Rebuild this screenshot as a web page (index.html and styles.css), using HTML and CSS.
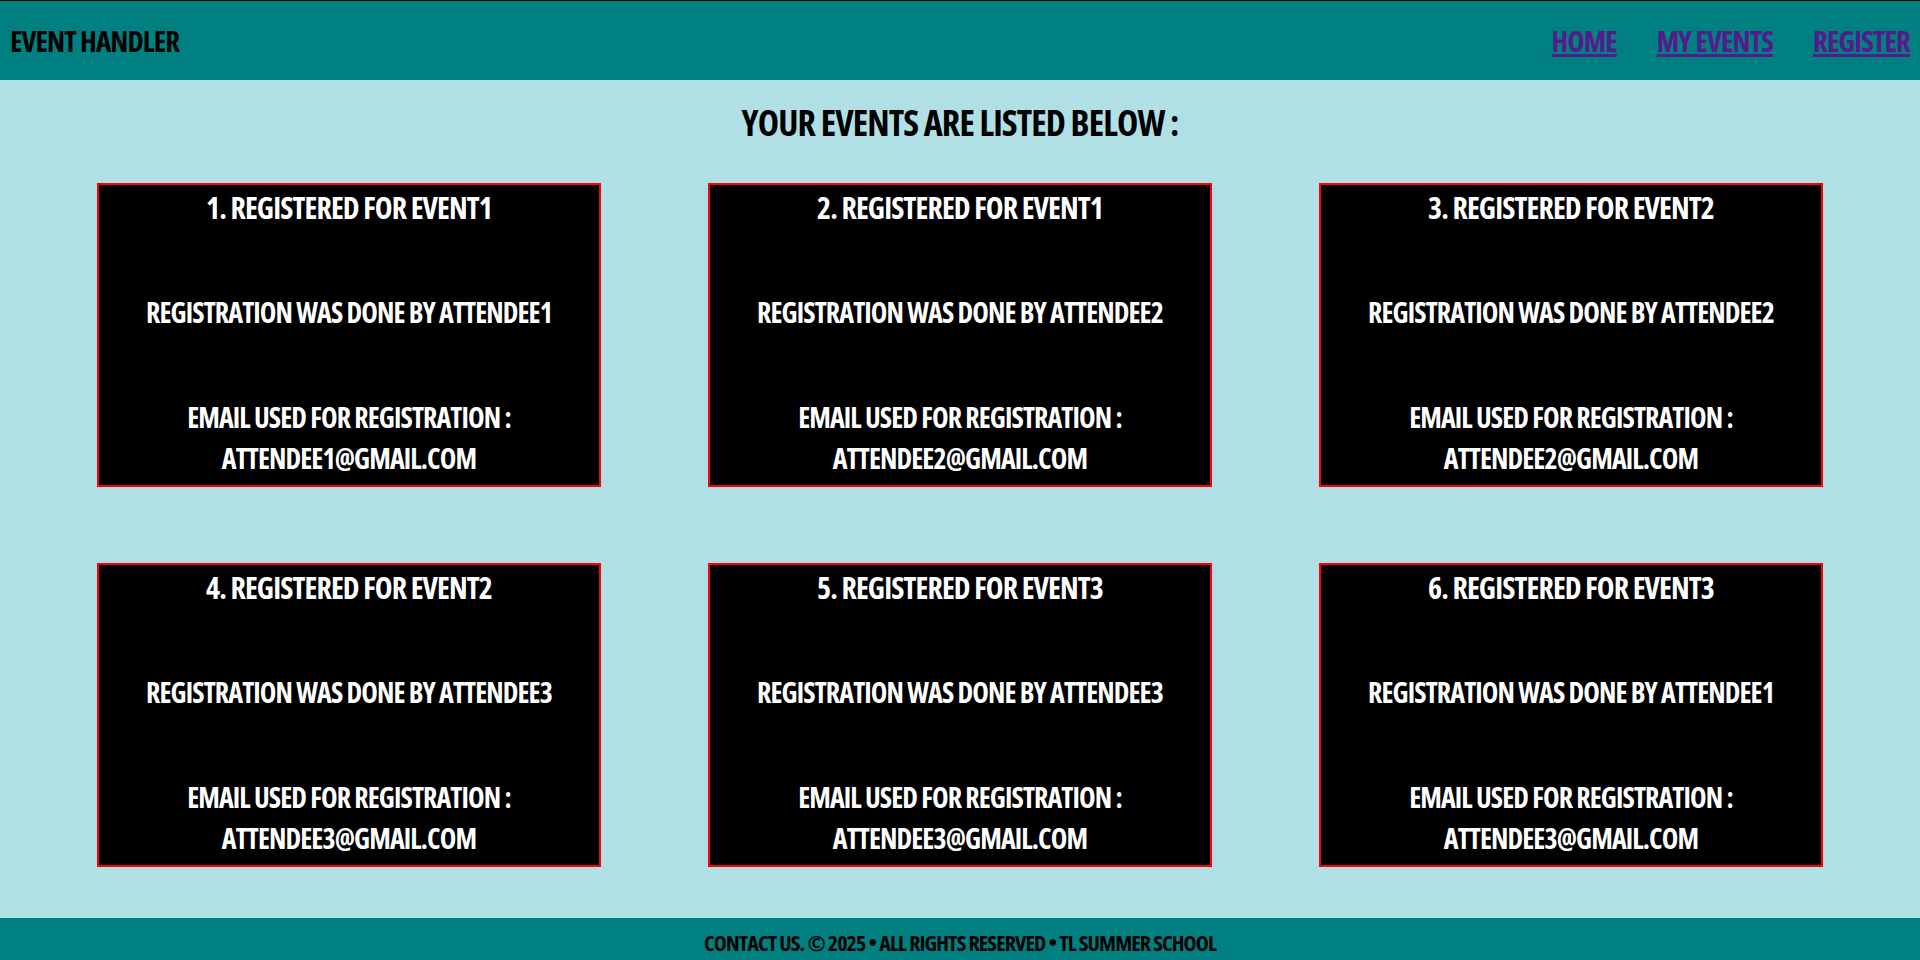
FILE: index.html
```html
<!DOCTYPE html>
<html lang="en">
<head>
<meta charset="utf-8">
<title>My Events</title>
<link rel="stylesheet" href="styles.css">
</head>
<body>
<header class="topbar">
  <div class="brand">Event Handler</div>
  <nav class="nav">
    <a class="nav-link" href="#">Home</a>
    <a class="nav-link" href="#">My Events</a>
    <a class="nav-link" href="#">Register</a>
  </nav>
</header>
<main class="content">
  <h1 class="page-title">Your events are listed below :</h1>
  <section class="cards">
    <article class="card">
      <h3 class="card-title">1. Registered for event1</h3>
      <p class="card-line">Registration was done by attendee1</p>
      <p class="card-email">Email used for registration :<br>attendee1@gmail.com</p>
    </article>
    <article class="card">
      <h3 class="card-title">2. Registered for event1</h3>
      <p class="card-line">Registration was done by attendee2</p>
      <p class="card-email">Email used for registration :<br>attendee2@gmail.com</p>
    </article>
    <article class="card">
      <h3 class="card-title">3. Registered for event2</h3>
      <p class="card-line">Registration was done by attendee2</p>
      <p class="card-email">Email used for registration :<br>attendee2@gmail.com</p>
    </article>
    <article class="card">
      <h3 class="card-title">4. Registered for event2</h3>
      <p class="card-line">Registration was done by attendee3</p>
      <p class="card-email">Email used for registration :<br>attendee3@gmail.com</p>
    </article>
    <article class="card">
      <h3 class="card-title">5. Registered for event3</h3>
      <p class="card-line">Registration was done by attendee3</p>
      <p class="card-email">Email used for registration :<br>attendee3@gmail.com</p>
    </article>
    <article class="card">
      <h3 class="card-title">6. Registered for event3</h3>
      <p class="card-line">Registration was done by attendee1</p>
      <p class="card-email">Email used for registration :<br>attendee3@gmail.com</p>
    </article>
  </section>
</main>
<footer class="footer">Contact Us. &copy; 2025 &bull; All Rights Reserved &bull; TL Summer School</footer>
</body>
</html>
```
FILE: styles.css
```css
* { box-sizing: border-box; }

html, body {
  margin: 0;
  padding: 0;
}

body {
  background: #b0e0e6;
  font-family: "Open Sans", "Roboto", sans-serif;
  font-stretch: 75%;
  font-weight: 700;
  text-transform: uppercase;
  letter-spacing: -0.055em;
  color: #000;
}

.topbar {
  height: 80px;
  background: #008080;
  border-top: 1px solid #0a0a0a;
  display: flex;
  align-items: center;
  justify-content: space-between;
  padding: 0 10px 0 10px;
}

.brand {
  font-size: 29px;
  line-height: 40px;
}

.nav {
  display: flex;
  gap: 40px;
}

.nav-link {
  font-size: 29px;
  line-height: 40px;
  color: #551a8b;
  text-decoration: underline;
  text-decoration-thickness: 3px;
  text-underline-offset: 2px;
}

.content {
  padding: 19px 0 51px;
}

.page-title {
  margin: 0 0 36px;
  text-align: center;
  font-size: 36px;
  line-height: 48px;
  font-weight: 700;
}

.cards {
  display: grid;
  grid-template-columns: repeat(3, 504px);
  justify-content: center;
  column-gap: 107px;
  row-gap: 76px;
}

.card {
  height: 304px;
  background: #000;
  border: 2px solid #ff0000;
  color: #fff;
  text-align: center;
  display: flex;
  flex-direction: column;
  gap: 64px;
  padding: 2px 8px 6px;
}

.card-title {
  margin: 0;
  font-size: 30px;
  line-height: 41px;
  font-weight: 700;
}

.card-line,
.card-email {
  margin: 0;
  font-size: 28px;
  line-height: 41px;
}

.footer {
  height: 42px;
  background: #008080;
  text-align: center;
  font-size: 22px;
  line-height: 24px;
  padding: 12px 0 6px;
}
```
